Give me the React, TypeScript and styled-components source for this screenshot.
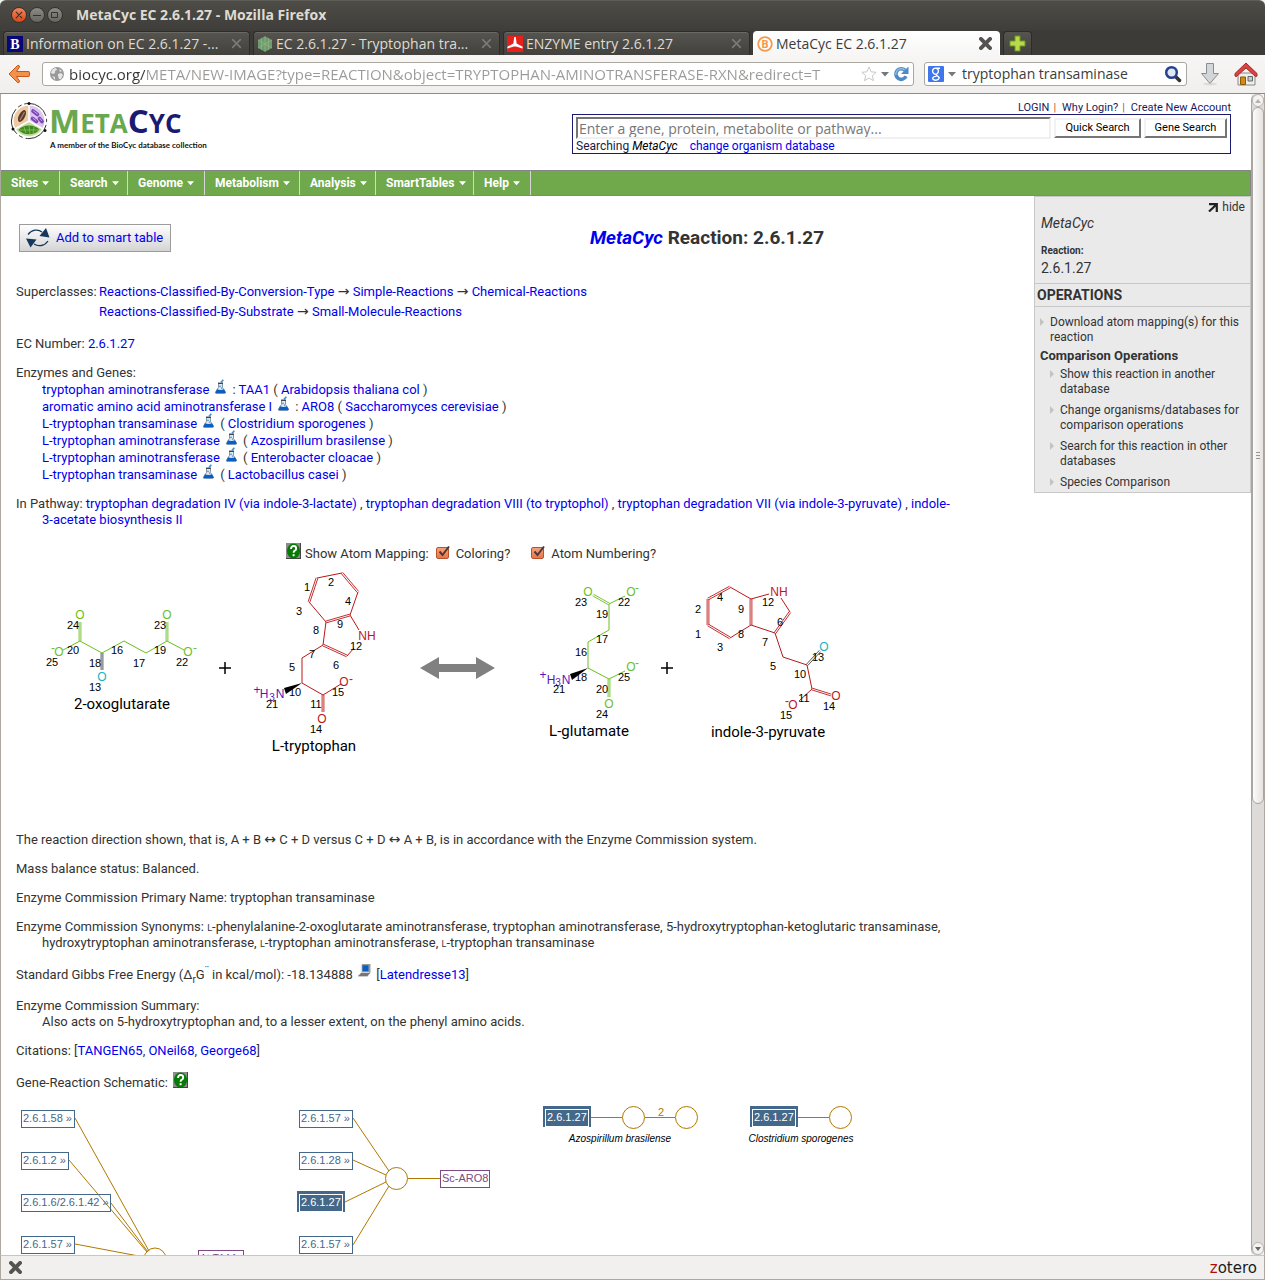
import React from "react";
import styled, { createGlobalStyle, css } from "styled-components";

const uiFont = `"Open Sans", "Noto Sans", sans-serif`;
const pageFont = `Roboto, "Open Sans", sans-serif`;
const link = "#0000ee";

const Global = createGlobalStyle`
  * { box-sizing: border-box; }
  body { margin: 0; background: #f2f1f0; font-family: ${pageFont}; font-size: 13px; line-height: 16px; color: #333; }
  a { color: ${link}; text-decoration: none; }
  svg { display: block; }
`;

/* ---------- window frame ---------- */

const Window = styled.div`
  display: flex;
  flex-direction: column;
  height: 100vh;
  overflow: hidden;
`;

const TitleBar = styled.header`
  display: flex;
  align-items: center;
  flex: none;
  height: 31px;
  padding: 0 11px 2px;
  border-top: 1px solid #5f5d57;
  border-radius: 6px 6px 0 0;
  background: linear-gradient(#4d4c47, #3e3d39);
  color: #dfdbd2;
  font: bold 14px/20px ${uiFont};
`;

const WindowButtons = styled.div`
  display: flex;
  gap: 2px;
  margin-right: 13px;
`;

const WindowButton = styled.button<{ $close?: boolean }>`
  display: grid;
  place-items: center;
  width: 16px;
  height: 16px;
  padding: 0;
  border: 1px solid #33322e;
  border-radius: 50%;
  background: ${(p) => (p.$close ? "linear-gradient(#f7845a, #d9481b)" : "linear-gradient(#8b8a83, #66655f)")};
  color: #33322e;
`;

const TabStrip = styled.div`
  display: flex;
  flex: none;
  gap: 3px;
  height: 24px;
  padding: 0 3px;
  background: #3c3b37;
`;

const Tab = styled.div<{ $active?: boolean }>`
  display: flex;
  align-items: center;
  flex: 0 1 247px;
  min-width: 0;
  height: 24px;
  gap: 3px;
  padding: 0 7px 0 3px;
  border-radius: 4px 4px 0 0;
  border: 1px solid #2d2c29;
  border-bottom: 0;
  box-shadow: inset 0 1px 0 #6a6964;
  background: linear-gradient(#55544f, #42413d);
  color: #dfdbd2;
  font: 14px/20px ${uiFont};
  ${(p) =>
    p.$active &&
    css`
      background: linear-gradient(#ffffff, #f7f6f5);
      border-color: #fff;
      box-shadow: none;
      color: #3c3c3c;
    `}
`;

const TabLabel = styled.span`
  flex: 1;
  min-width: 0;
  overflow: hidden;
  white-space: nowrap;
  text-overflow: ellipsis;
`;

const IconButton = styled.button<{ $color?: string }>`
  display: grid;
  place-items: center;
  flex: none;
  padding: 0;
  border: 0;
  background: none;
  color: ${(p) => p.$color ?? "#55534f"};
`;

const NewTab = styled.button`
  display: grid;
  place-items: center;
  width: 29px;
  height: 24px;
  padding: 0;
  border: 1px solid #2d2c29;
  border-bottom: 0;
  border-radius: 4px 4px 0 0;
  background: linear-gradient(#55544f, #42413d);
`;

const NavBar = styled.div`
  display: flex;
  align-items: center;
  flex: none;
  height: 39px;
  padding: 0 7px 0 8px;
  border-bottom: 1px solid #8f8c88;
  background: linear-gradient(#f7f6f5, #f0efee);
`;

const Field = styled.div<{ $grow?: boolean }>`
  display: flex;
  align-items: center;
  flex: ${(p) => (p.$grow ? "1 1 0" : "0 0 263px")};
  min-width: 0;
  height: 24px;
  gap: 4px;
  margin-left: 10px;
  padding: 0 4px 0 ${(p) => (p.$grow ? 6 : 3)}px;
  border: 1px solid #aaa6a0;
  border-radius: 3px;
  background: #fff;
`;

const FieldInput = styled.input<{ $url?: boolean }>`
  flex: 1;
  min-width: 0;
  height: 20px;
  padding: 0 0 0 2px;
  border: 0;
  outline: 0;
  background: none;
  color: #3c3c3c;
  font: 14px/20px ${uiFont};
  ${(p) =>
    p.$url &&
    css`
      padding: 0;
      font-size: 15px;
      color: transparent;
      background: linear-gradient(to right, #333 76px, #9c9a98 76px);
      background-clip: text;
      -webkit-background-clip: text;
    `}
`;

const NavTools = styled.div`
  display: flex;
  align-items: center;
  gap: 14px;
  margin-left: 13px;
`;

const Viewport = styled.div`
  display: flex;
  flex: 1;
  min-height: 0;
  border-left: 1px solid #aca8a0;
  border-right: 1px solid #aca8a0;
`;

const Page = styled.div`
  flex: 1;
  min-width: 0;
  overflow: hidden;
  background: #fff;
`;

const StatusBar = styled.footer`
  display: flex;
  align-items: center;
  justify-content: space-between;
  flex: none;
  height: 25px;
  padding: 0 7px 0 8px;
  border: 1px solid #aca8a0;
  border-top-color: #c9c5c1;
  background: #f1f0ee;
`;

const Zotero = styled.button`
  padding: 0;
  border: 0;
  background: none;
  color: #1c1c1c;
  font: 15px/20px "DejaVu Sans", sans-serif;
`;

const ZoteroZ = styled.span`
  color: #a81010;
`;

/* ---------- scroll bar ---------- */

const ScrollBar = styled.div`
  display: flex;
  flex-direction: column;
  flex: none;
  width: 13px;
  border-left: 1px solid #a9a5a1;
  border-radius: 6px;
  background: #dddad8;
`;

const ScrollArrow = styled.button`
  display: grid;
  place-items: center;
  flex: none;
  width: 12px;
  height: 13px;
  padding: 0;
  border: 1px solid #b8b4b0;
  border-radius: 6px;
  background: #f4f3f2;
`;

const ScrollThumb = styled.div`
  display: flex;
  flex-direction: column;
  justify-content: center;
  align-items: center;
  gap: 2px;
  flex: 0 0 60%;
  border: 1px solid #a9a5a1;
  border-radius: 6px;
  background: linear-gradient(to right, #fbfbfa, #e6e3e1);
`;

const Grip = styled.i`
  width: 4px;
  height: 1px;
  background: #9a9793;
`;

const Spring = styled.div`
  flex: 1;
`;

/* ---------- site header ---------- */

const SiteHeader = styled.div`
  display: flex;
  justify-content: space-between;
  height: 76px;
  padding: 6px 20px 0 8px;
`;

const Brand = styled.a`
  display: flex;
  height: 50px;
`;

const BrandWords = styled.span`
  display: flex;
  flex-direction: column;
  padding-top: 4px;
`;

const BrandName = styled.span`
  color: #6aa84f;
  font: bold 26px/33px "Open Sans", sans-serif;
`;

const Cap = styled.span`
  font-size: 33px;
`;

const Navy = styled.span`
  color: #1a1a72;
`;

const Tagline = styled.span`
  padding-left: 1px;
  color: #111;
  font: bold 8px/10px Lato, sans-serif;
  white-space: nowrap;
`;

const SearchArea = styled.div`
  width: 659px;
`;

const AccountLinks = styled.nav`
  display: flex;
  justify-content: flex-end;
  gap: 4px;
  height: 14px;
  font-size: 11px;
  line-height: 15px;
  color: #b5543a;
  a { color: #1a1a5e; }
  a + i + a { margin-left: 2px; }
  i { font-style: normal; }
`;

const SearchForm = styled.form`
  height: 40px;
  padding: 2px 3px 0;
  border: 1px solid #1a1a72;
`;

const SearchLine = styled.div`
  display: flex;
  align-items: center;
  gap: 3px;
`;

const SearchInput = styled.input`
  flex: 1;
  min-width: 0;
  height: 22px;
  padding: 0 1px;
  border: 2px solid;
  border-color: #757575 #f0f0f0 #f0f0f0 #757575;
  background: #fff;
  font: 14px/18px ${uiFont};
  &::placeholder { color: #777; opacity: 1; }
`;

const PushButton = styled.button<{ $width: number }>`
  width: ${(p) => p.$width}px;
  height: 20px;
  padding: 0;
  border: 2px solid;
  border-color: #f2f2f2 #757575 #757575 #f2f2f2;
  background: #fff;
  color: #000;
  font: 11px/14px ${pageFont};
`;

const Searching = styled.div`
  font-size: 12px;
  line-height: 15px;
  color: #1a1a3e;
  em { color: #000; margin-right: 12px; }
`;

const Menu = styled.nav`
  display: flex;
  height: 26px;
  border: 1px solid #858585;
  border-left: 0;
  background: #70a84c;
`;

const MenuItem = styled.button<{ $width: number }>`
  display: flex;
  align-items: center;
  gap: 4px;
  width: ${(p) => p.$width}px;
  padding: 0 0 0 10px;
  border: 0;
  border-right: 1px solid #d6d6d6;
  background: none;
  color: #fff;
  font: bold 12px/16px ${pageFont};
`;

/* ---------- record ---------- */

const Columns = styled.div`
  display: flex;
  align-items: flex-start;
`;

const Main = styled.main`
  flex: 1;
  min-width: 0;
  padding: 28px 0 0 15px;
`;

const TitleRow = styled.div`
  display: grid;
  grid-template-columns: 364px 1fr;
  align-items: center;
`;

const SmartTable = styled.button`
  display: flex;
  align-items: center;
  justify-self: start;
  gap: 6px;
  width: 152px;
  height: 28px;
  margin-left: 3px;
  padding: 0 6px;
  border: 1px solid #9c9c9c;
  background: linear-gradient(#fefefe, #d4d4d4);
  color: ${link};
  font: 13px/16px ${pageFont};
  white-space: nowrap;
`;

const Heading = styled.h1`
  margin: 0;
  text-align: center;
  font: bold 19px/24px ${pageFont};
`;

const Superclasses = styled.div`
  display: grid;
  grid-template-columns: 80px 1fr;
  column-gap: 3px;
  margin: 30px 0 14px;
  line-height: 20px;
`;

const Lineage = styled.div`
  grid-column: 2;
`;

const Arrow = styled.span`
  font-family: "DejaVu Sans", sans-serif;
  font-size: 14px;
  line-height: 0;
`;

const Para = styled.p<{ $line?: number }>`
  margin: 13px 36px 0 0;
  padding-left: 26px;
  text-indent: -26px;
  line-height: ${(p) => p.$line ?? 16}px;
`;

const EnzymeList = styled.ul`
  margin: 0;
  padding: 0 0 0 26px;
  list-style: none;
`;

const Enzyme = styled.li`
  display: flex;
  gap: 5px;
  height: 17px;
  line-height: 17px;
  svg { margin-top: -2px; }
`;

const NoBreak = styled.span`
  white-space: nowrap;
`;

const SmallL = styled.span`
  font-size: 9px;
  line-height: 0;
`;

const Sub = styled.sub`
  font-size: 10px;
  line-height: 0;
`;

const Sup = styled.sup`
  font-size: 10px;
  line-height: 0;
`;

const Inline = styled.span`
  display: inline-block;
  height: 16px;
  margin: 0 2px;
  vertical-align: -1px;
  text-indent: 0;
`;

const Options = styled.form`
  display: flex;
  align-items: center;
  gap: 4px;
  height: 24px;
  margin: 13px 0 0 270px;
  padding-top: 1px;
  > svg { margin-top: -6px; }
`;

const Option = styled.label`
  display: flex;
  align-items: center;
  gap: 5px;
  margin-right: 14px;
  margin-left: 3px;
`;

const TickWrap = styled.span`
  position: relative;
  width: 15px;
  height: 14px;
  margin-top: -4px;
`;

const TickInput = styled.input`
  display: block;
  appearance: none;
  width: 13px;
  height: 12px;
  margin: 2px 0 0;
  border: 1px solid #b8532f;
  border-radius: 2px;
  background: linear-gradient(#f6a07c, #ec7548);
`;

const TickMark = styled.svg`
  position: absolute;
  left: 0;
  top: 0;
  pointer-events: none;
`;

const Diagram = styled.svg`
  width: 820px;
  height: 254px;
  margin-left: 14px;
`;

const Schematic = styled.svg`
  width: 860px;
  height: 190px;
  margin-top: 7px;
`;

/* ---------- sidebar ---------- */

const Sidebar = styled.aside`
  flex: none;
  width: 217px;
  border: 1px solid #c8c8c8;
  background: #eaeaea;
  font-size: 12px;
  line-height: 15px;
  a { color: #333; }
`;

const SideTop = styled.div`
  display: flex;
  flex-direction: column;
  height: 86px;
  padding: 2px 6px 0;
`;

const HideButton = styled.button`
  display: flex;
  align-items: center;
  align-self: flex-end;
  gap: 4px;
  margin-right: -1px;
  padding: 0;
  border: 0;
  background: none;
  color: #333;
  font: 12px/16px ${pageFont};
`;

const Organism = styled.em`
  font-size: 14px;
  line-height: 17px;
`;

const SideLabel = styled.strong`
  margin-top: 13px;
  font-size: 10px;
  line-height: 12px;
`;

const SideValue = styled.span`
  margin-top: 2px;
  font-size: 14px;
  line-height: 18px;
`;

const SideHeading = styled.h2`
  margin: 0;
  padding: 0 2px;
  border: solid #c8c8c8;
  border-width: 1px 0;
  font: bold 14px/22px ${pageFont};
`;

const SideList = styled.ul<{ $nested?: boolean }>`
  display: flex;
  flex-direction: column;
  gap: 6px;
  margin: 0;
  padding: ${(p) => (p.$nested ? "4px 6px 2px 15px" : "8px 6px 0 5px")};
  list-style: none;
`;

const SideItem = styled.li`
  display: flex;
  align-items: flex-start;
  gap: 6px;
`;

const SideGroup = styled.h3`
  margin: 3px 0 0 5px;
  font: bold 13px/15px ${pageFont};
`;

const Bullet = styled.i`
  flex: none;
  margin-top: 3px;
  border: 4px solid transparent;
  border-left-color: #c2c2c2;
  border-right: 0;
`;

/* ---------- icons ---------- */

const Cross = ({ size = 10, width = 2 }: { size?: number; width?: number }) => (
  <svg width={size} height={size} viewBox="0 0 10 10" stroke="currentColor" strokeWidth={width} strokeLinecap="round">
    <path d="M1.500 1.500l7 7M8.500 1.500l-7 7" />
  </svg>
);

const Caret = ({ color = "#fff", width = 8 }: { color?: string; width?: number }) => (
  <svg width={width} height="5" viewBox="0 0 8 5">
    <path d="M0 0h8L4 4.600z" fill={color} />
  </svg>
);

const Flask = () => (
  <svg width="13" height="15" viewBox="0 0 12 15">
    <path d="M4 4.500h4v4l3 4.500q.2 1.300-.8 1.300H1.400Q.3 14.300 1 13l3-4.600z" fill="#dfe9f2" stroke="#6c7d8e" strokeWidth=".8" />
    <path d="M2.500 10.200q3.500 1.400 7 0l1.600 3q.1 1-1 1H1.900q-1.100 0-.7-1z" fill="#0a5fc4" />
    <path d="M3.500 4.200h5" stroke="#333" strokeWidth="1.200" />
    <path d="M6.500 3.500L8.800.8" stroke="#3f92d8" strokeWidth="1.700" />
    <circle cx="5.500" cy="7.400" r=".8" fill="#3f92d8" />
    <circle cx="7" cy="9" r=".6" fill="#0a5fc4" />
  </svg>
);

const Help = () => (
  <svg width="15" height="16" viewBox="0 0 15 16">
    <path d="M0 0h15v16H0z" fill="#8c8c8c" />
    <path d="M0 16h15V0" fill="none" stroke="#444" strokeWidth="2" />
    <ellipse cx="7.500" cy="8" rx="6.600" ry="7.400" fill="#057a05" />
    <path d="M5 6q0-3 2.600-3t2.600 2.400q0 1.600-1.700 2.500-.9.500-.9 1.800" fill="none" stroke="#fff" strokeWidth="1.900" />
    <path d="M6.600 11.200h2v2h-2z" fill="#fff" />
  </svg>
);

const Computer = () => (
  <svg width="13" height="13" viewBox="0 0 13 13">
    <path d="M4 0h8.500v8.500l-3 4H0l3.500-4z" fill="#9b9b9b" />
    <path d="M3.500 8.800h8.500L9.200 12H0z" fill="#777" />
    <path d="M4.500 1.300h6v6h-6z" fill="#0a5fc4" />
    <path d="M3.300.6v7.800h8" fill="none" stroke="#dcdcdc" />
  </svg>
);

const Cycle = () => (
  <svg width="24" height="20" viewBox="0 0 24 20" fill="none" stroke="#16375c" strokeWidth="1.300">
    <path d="M2 6.500C6 1.500 12 .8 16 4" />
    <path d="M22 13c-3.500 5-9.500 6-14 3" />
    <path d="M20 0l3.500 9.500L13.500 8z" fill="#16375c" stroke="none" />
    <path d="M0 10.500l10.500 1-6 8z" fill="#16375c" stroke="none" />
  </svg>
);

const BackArrow = () => (
  <svg width="24" height="20" viewBox="0 0 24 20">
    <path d="M1 10L9.500 1.500q2-.8 2 1.500L8.500 7.500H21q1.500 2.500 0 5H8.500l3 4.500q0 2.300-2 1.500z" fill="#f2924a" stroke="#c9561c" strokeLinejoin="round" />
  </svg>
);

const Globe = () => (
  <svg width="16" height="16" viewBox="0 0 16 16">
    <circle cx="8" cy="8" r="7" fill="#9a9a9a" />
    <path d="M3 4q2-2 4-2l1 2-2 1 0 2-2 1-2-1zM9 8l3-1 2 2-2 4-2 0-1-3zM10 3l3 2-2 1zM3 10l3 1 0 3z" fill="#e6e6e6" />
  </svg>
);

const Star = () => (
  <svg width="16" height="16" viewBox="0 0 16 16">
    <path d="M8 1l2.100 4.800 5 .5-3.800 3.400 1.200 5L8 12l-4.500 2.700 1.200-5L.9 6.300l5-.5z" fill="#fff" stroke="#cbc8c5" />
  </svg>
);

const Reload = () => (
  <svg width="16" height="16" viewBox="0 0 16 16">
    <path d="M12 4.300A5.300 5.300 0 1 0 13 10.300" fill="none" stroke="#4b8ac6" strokeWidth="3.600" />
    <path d="M15.500.5v7.500H8z" fill="#4b8ac6" />
    <path d="M11.500 3.800A5.300 5.300 0 0 0 3 9" fill="none" stroke="#9cc4ea" strokeWidth="1.200" />
  </svg>
);

const Google = () => (
  <svg width="16" height="16" viewBox="0 0 16 16">
    <rect width="16" height="16" rx="1" fill="#3f76ee" />
    <path d="M12 2.200H8a3 3 0 1 0 1 5.600M8.500 2.400c2.600 1 2.400 4.200.4 5.400-1.300.8-1 1.400.4 2.100 3 1.500 2 4.300-1.600 4.300-4 0-4.200-3.700.6-3.800" fill="none" stroke="#fff" strokeWidth="1.400" />
  </svg>
);

const Magnifier = () => (
  <svg width="18" height="18" viewBox="0 0 18 18">
    <path d="M11.500 11.500l4 4" stroke="#333" strokeWidth="3.500" strokeLinecap="round" />
    <circle cx="7.500" cy="7.500" r="5.300" fill="#dfe8f8" stroke="#27418e" strokeWidth="2.500" />
  </svg>
);

const Download = () => (
  <svg width="20" height="24" viewBox="0 0 20 24">
    <ellipse cx="10" cy="22" rx="7" ry="1.500" fill="#dcdcda" />
    <path d="M6.500 1.500h7v10h5L10 21.500 1.500 11.500h5z" fill="#d3d6d8" stroke="#8b8e90" strokeLinejoin="round" />
  </svg>
);

const Home = () => (
  <svg width="24" height="24" viewBox="0 0 24 24">
    <path d="M4 11h17v12H4z" fill="#eeeeec" stroke="#888a85" />
    <path d="M6.500 15h5v7.500h-5z" fill="#d08a1c" stroke="#8f5902" />
    <path d="M14 14.500h4.500V19H14z" fill="#b9cdda" stroke="#666" />
    <path d="M12 1L1 11.500v2.500q1 1 2 0l9-8 9 8q1 1 2 0v-2.500z" fill="#d84343" stroke="#a52828" strokeLinejoin="round" />
  </svg>
);

const Plus = () => (
  <svg width="17" height="17" viewBox="0 0 17 17">
    <path d="M6 1h5v5h5v5h-5v5H6v-5H1V6h5z" fill="#b9d84c" stroke="#6b9a1d" />
  </svg>
);

const BrendaIcon = () => (
  <svg width="16" height="16" viewBox="0 0 16 16">
    <path d="M0 0h16v16H0z" fill="#07077a" />
    <text x="8" y="13" textAnchor="middle" fontFamily="Liberation Serif, serif" fontWeight="bold" fontSize="14" fill="#fff">B</text>
  </svg>
);

const HexIcon = () => (
  <svg width="16" height="16" viewBox="0 0 16 16">
    <path d="M8 .3l7 3.700v8L8 15.700 1 12V4z" fill="#6f9a6c" />
    <path d="M8 .3v15.400M1 4l14 8M15 4L1 12M4.500 2.200v11.600M11.500 2.200v11.600" stroke="#8fb58a" strokeWidth=".7" />
  </svg>
);

const ExpasyIcon = () => (
  <svg width="16" height="16" viewBox="0 0 16 16">
    <path d="M0 0h16v16H0z" fill="#e8201c" />
    <path d="M7.200 1h1.600l.8 6.500 6 3.300v1.700L9 10.500H7L.4 12.500v-1.700l6-3.300z" fill="#fff" />
  </svg>
);

const BioCycIcon = () => (
  <svg width="16" height="16" viewBox="0 0 16 16">
    <circle cx="8" cy="8" r="6.800" fill="#fff" stroke="#f5994a" strokeWidth="1.800" />
    <text x="8" y="12" textAnchor="middle" fontFamily="Open Sans, sans-serif" fontWeight="bold" fontSize="11" fill="#f5994a">B</text>
  </svg>
);

const MetaLogo = () => (
  <svg width="40" height="42" viewBox="0 0 40 42">
    <circle cx="20" cy="21" r="15.500" fill="#fff" />
    <path d="M20 21V5.500A15.500 15.500 0 0 0 6.600 28.700z" fill="#eec9a4" />
    <path d="M20 21V5.500A15.500 15.500 0 0 1 33.400 28.700z" fill="#dcc6ee" />
    <path d="M20 21L6.600 28.700a15.500 15.500 0 0 0 26.800 0z" fill="#c6dba0" />
    <path d="M20 21V5M20 21L6 29M20 21l14 8" stroke="#fff" strokeWidth="1.500" />
    <ellipse cx="13" cy="16" rx="3" ry="6.500" transform="rotate(28 13 16)" fill="#59392b" />
    <path d="M11 20l4.500-8" stroke="#a98570" strokeWidth="1.300" />
    <g stroke="#7a45b5" strokeWidth="3.600" strokeLinecap="round">
      <path d="M24 11l4.500 3.500M23.500 18.500l4 3M30.500 18.500l2.500 3" />
    </g>
    <path d="M24.500 11l4 3M24 18.200l3 2.300M31 18.500l1.500 2" stroke="#c7a3ee" strokeLinecap="round" />
    <path d="M9.500 30q4-5 11-4.500 6 .3 10 4-4 5-11 4.800-6-.1-10-4.300z" fill="#3f8a22" />
    <path d="M11 30h19M15 27l2 6M20 26l1 8M25 27l-1 6.500" stroke="#8cc655" strokeWidth=".8" />
    <circle cx="20" cy="21" r="17.600" fill="none" stroke="#333" strokeDasharray="27 3 4 2.800" strokeDashoffset="-4" />
    <circle cx="20" cy="3.500" r="1.500" fill="#111" />
    <circle cx="4" cy="29" r="1.500" fill="#111" />
    <circle cx="36" cy="30.500" r="1.500" fill="#111" />
  </svg>
);

/* ---------- reaction drawing ---------- */

type Pt = [number, number];
type Bond = [Pt, Pt];
type Atom = [string, number, number, string?];
type Mark = [string, number, number];

const green = "#6abf1e";
const red = "#bb1717";
const cyan = "#12b5c4";
const purple = "#5c12b5";

function DoubleBond({ a, b, color }: { a: Pt; b: Pt; color: string }) {
  const len = Math.hypot(b[0] - a[0], b[1] - a[1]);
  const nx = ((b[1] - a[1]) / len) * 0.9;
  const ny = ((a[0] - b[0]) / len) * 0.9;
  return (
    <g stroke={color} strokeWidth=".9">
      <line x1={a[0] + nx} y1={a[1] + ny} x2={b[0] + nx} y2={b[1] + ny} />
      <line x1={a[0] - nx} y1={a[1] - ny} x2={b[0] - nx} y2={b[1] - ny} />
    </g>
  );
}

interface MoleculeProps {
  color: string;
  single: Pt[][];
  double: Bond[];
  dark?: Bond;
  wedge?: string;
  atoms: Atom[];
  marks: Mark[];
  name: Mark;
}

function Molecule({ color, single, double, dark, wedge, atoms, marks, name }: MoleculeProps) {
  return (
    <g>
      {single.map((pts, i) => (
        <polyline key={i} points={pts.map((p) => p.join(",")).join(" ")} fill="none" stroke={color} />
      ))}
      {double.map(([a, b], i) => (
        <DoubleBond key={i} a={a} b={b} color={color} />
      ))}
      {dark && <DoubleBond a={dark[0]} b={dark[1]} color="#444" />}
      {wedge && <path d={wedge} fill="#000" />}
      <g fontFamily="Liberation Sans, Arial, sans-serif" fontSize="11" textAnchor="middle">
        {atoms.map(([t, x, y, c], i) => (
          <text key={i} x={x} y={y + 4} fontSize={t === "3" ? 10 : 12} fill={c ?? color}>{t}</text>
        ))}
        {marks.map(([t, x, y], i) => (
          <text key={i} x={x} y={y + 4} fill="#000">{t}</text>
        ))}
      </g>
      <text x={name[1]} y={name[2] + 5} fontFamily="Roboto, sans-serif" fontSize="15" textAnchor="middle" fill="#000">{name[0]}</text>
    </g>
  );
}

const oxoglutarate: MoleculeProps = {
  color: green,
  single: [
    [[63, 650], [80, 641], [102, 653], [124, 641], [146, 653], [167, 641], [184, 650]],
  ],
  double: [[[80, 622], [80, 641]], [[167, 622], [167, 641]]],
  dark: [[102, 653], [102, 670]],
  atoms: [["O", 80, 615], ["O", 59, 652], ["-", 53, 648], ["O", 102, 677, cyan], ["O", 167, 615], ["O", 188, 652], ["-", 195, 648]],
  marks: [["24", 73, 625], ["20", 73, 650], ["25", 52, 662], ["18", 95, 663], ["13", 95, 687], ["16", 117, 650], ["17", 139, 663], ["19", 160, 650], ["23", 160, 625], ["22", 182, 662]],
  name: ["2-oxoglutarate", 122, 704],
};

const tryptophan: MoleculeProps = {
  color: red,
  single: [
    [[317, 578], [342, 573]],
    [[358, 592], [350, 615], [359, 630]],
    [[309, 602], [326, 622], [323, 645], [302, 658], [302, 683], [323, 695], [341, 684]],
    [[354, 648], [347, 656]],
  ],
  double: [[[317, 578], [309, 602]], [[342, 573], [358, 592]], [[350, 615], [326, 622]], [[347, 656], [323, 645]], [[323, 695], [323, 712]]],
  wedge: "M302 683L284 688L286 694Z",
  atoms: [["NH", 367, 636], ["O", 322, 719], ["O", 344, 682], ["-", 351, 679], ["+", 257, 690, purple], ["H", 264, 694, purple], ["3", 272, 697, purple], ["N", 280, 694, purple]],
  marks: [["1", 307, 587], ["2", 331, 582], ["3", 299, 611], ["4", 348, 601], ["9", 340, 624], ["8", 316, 630], ["12", 356, 646], ["7", 312, 654], ["6", 336, 665], ["5", 292, 667], ["10", 295, 692], ["15", 338, 692], ["11", 316, 704], ["14", 316, 729], ["21", 272, 704]],
  name: ["L-tryptophan", 314, 746],
};

const glutamate: MoleculeProps = {
  color: green,
  single: [
    [[625, 596], [609, 604], [609, 630], [588, 642], [588, 668], [609, 679], [625, 671]],
  ],
  double: [[[593, 595], [609, 604]], [[609, 679], [609, 697]]],
  wedge: "M588 668L570 674L572 680Z",
  atoms: [["O", 588, 592], ["O", 631, 592], ["-", 637, 588], ["O", 631, 667], ["-", 637, 663], ["O", 609, 704], ["+", 543, 675, purple], ["H", 551, 680, purple], ["3", 558, 682, purple], ["N", 566, 680, purple]],
  marks: [["23", 581, 602], ["22", 624, 602], ["19", 602, 614], ["17", 602, 639], ["16", 581, 652], ["18", 581, 677], ["25", 624, 677], ["20", 602, 689], ["21", 559, 689], ["24", 602, 714]],
  name: ["L-glutamate", 589, 731],
};

const indolepyruvate: MoleculeProps = {
  color: red,
  single: [
    [[730, 587], [751, 599], [769, 594]],
    [[730, 638], [751, 625], [775, 633], [783, 657], [807, 665], [812, 689], [799, 701]],
    [[781, 598], [790, 612]],
  ],
  double: [[[730, 587], [708, 599]], [[708, 599], [708, 625]], [[708, 625], [730, 638]], [[751, 625], [751, 599]], [[790, 612], [775, 633]], [[812, 689], [831, 695]]],
  dark: [[807, 665], [820, 651]],
  atoms: [["NH", 779, 592], ["O", 824, 647, cyan], ["O", 836, 696], ["O", 793, 705], ["-", 787, 701]],
  marks: [["4", 720, 597], ["2", 698, 609], ["9", 741, 609], ["12", 768, 602], ["1", 698, 634], ["8", 741, 634], ["6", 780, 622], ["3", 720, 647], ["7", 765, 642], ["5", 773, 666], ["13", 818, 657], ["10", 800, 674], ["11", 804, 698], ["14", 829, 706], ["15", 786, 715]],
  name: ["indole-3-pyruvate", 768, 732],
};

const Reaction = () => (
  <Diagram viewBox="30 565 820 254" role="img" aria-label="Reaction diagram">
    <Molecule {...oxoglutarate} />
    <path d="M219 668h12M225 662v12M661 668h12M667 662v12" stroke="#000" strokeWidth="1.500" />
    <Molecule {...tryptophan} />
    <path d="M420 668l19-11v7h37v-7l19 11-19 11v-7h-37v7z" fill="#808080" />
    <Molecule {...glutamate} />
    <Molecule {...indolepyruvate} />
  </Diagram>
);

/* ---------- gene schematic ---------- */

const brown = "#b07800";
const steel = "#44688a";

function NodeBox({ x, y, width, text, color = steel, size = 11 }: { x: number; y: number; width: number; text: string; color?: string; size?: number }) {
  return (
    <g>
      <rect x={x + 0.5} y={y + 0.5} width={width - 1} height="17" fill="none" stroke={color} />
      <text x={x + 2} y={y + 12} fontSize={size} fill={color}>{text}</text>
    </g>
  );
}

function CurrentEc({ x, y }: { x: number; y: number }) {
  return (
    <g>
      <rect x={x} y={y} width="48" height="21" fill={steel} />
      <rect x={x + 2.5} y={y + 3.5} width="43" height="17" fill="none" stroke="#fff" />
      <text x={x + 4} y={y + 15} fill="#fff">2.6.1.27</text>
    </g>
  );
}

const GeneSchematic = () => (
  <Schematic viewBox="16 1100 860 190" fontFamily="Liberation Sans, Arial, sans-serif" fontSize="11" role="img" aria-label="Gene-reaction schematic">
    <g fill="none" stroke={brown}>
      <path d="M75 1118L149 1251M69 1160L147 1252M111 1203L148 1252M75 1244L144 1257" />
      <circle cx="155" cy="1259" r="11" />
      <path d="M353 1118L389 1171M353 1160L386 1175M345 1202L386 1182M353 1245L389 1186M408 1178.500h32" />
      <circle cx="396.500" cy="1178.500" r="11" />
      <path d="M591 1117.500h31M645 1117.500h30M798 1117.500h31" />
      <circle cx="633.500" cy="1117.500" r="11" />
      <circle cx="686.500" cy="1117.500" r="11" />
      <circle cx="840.500" cy="1117.500" r="11" />
    </g>
    <NodeBox x={21} y={1110} width={54} text="2.6.1.58 »" />
    <NodeBox x={21} y={1152} width={48} text="2.6.1.2 »" />
    <NodeBox x={21} y={1194} width={90} text="2.6.1.6/2.6.1.42 »" />
    <NodeBox x={21} y={1236} width={54} text="2.6.1.57 »" />
    <NodeBox x={198} y={1250} width={46} text="At-TAA1" color="#7d4a85" size={10} />
    <NodeBox x={299} y={1110} width={54} text="2.6.1.57 »" />
    <NodeBox x={299} y={1152} width={54} text="2.6.1.28 »" />
    <CurrentEc x={297} y={1191} />
    <NodeBox x={299} y={1236} width={54} text="2.6.1.57 »" />
    <NodeBox x={440} y={1170} width={50} text="Sc-ARO8" color="#7d4a85" size={11} />
    <CurrentEc x={543} y={1106} />
    <CurrentEc x={750} y={1106} />
    <text x="661" y="1116" textAnchor="middle" fill={brown}>2</text>
    <text x="620" y="1142" textAnchor="middle" fontSize="10" fontStyle="italic" fill="#000">Azospirillum brasilense</text>
    <text x="801" y="1142" textAnchor="middle" fontSize="10" fontStyle="italic" fill="#000">Clostridium sporogenes</text>
  </Schematic>
);

/* ---------- data ---------- */

const tabs = [
  { icon: <BrendaIcon />, label: "Information on EC 2.6.1.27 -..." },
  { icon: <HexIcon />, label: "EC 2.6.1.27 - Tryptophan tra..." },
  { icon: <ExpasyIcon />, label: "ENZYME entry 2.6.1.27" },
  { icon: <BioCycIcon />, label: "MetaCyc EC 2.6.1.27", active: true },
];

const menu: [string, number][] = [
  ["Sites", 59], ["Search", 68], ["Genome", 77], ["Metabolism", 95], ["Analysis", 76], ["SmartTables", 98], ["Help", 57],
];

const enzymes = [
  { name: "tryptophan aminotransferase", gene: "TAA1", organism: "Arabidopsis thaliana col" },
  { name: "aromatic amino acid aminotransferase I", gene: "ARO8", organism: "Saccharomyces cerevisiae" },
  { name: "L-tryptophan transaminase", organism: "Clostridium sporogenes" },
  { name: "L-tryptophan aminotransferase", organism: "Azospirillum brasilense" },
  { name: "L-tryptophan aminotransferase", organism: "Enterobacter cloacae" },
  { name: "L-tryptophan transaminase", organism: "Lactobacillus casei" },
];

const comparisons = [
  "Show this reaction in another database",
  "Change organisms/databases for comparison operations",
  "Search for this reaction in other databases",
  "Species Comparison",
];

const Link = ({ children }: { children: React.ReactNode }) => <a href="#">{children}</a>;

const Tick = ({ id, children }: { id: string; children: React.ReactNode }) => (
  <Option htmlFor={id}>
    <TickWrap>
      <TickInput id={id} type="checkbox" defaultChecked />
      <TickMark width="15" height="14" viewBox="0 0 15 14">
        <path d="M3.500 6.500l3 3.500L13 1.500" fill="none" stroke="#4a3a34" strokeWidth="2" />
      </TickMark>
    </TickWrap>
    {children}
  </Option>
);

export default function App() {
  return (
    <Window>
      <Global />
      <TitleBar>
        <WindowButtons>
          <WindowButton $close aria-label="Close"><Cross size={8} width={1.5} /></WindowButton>
          <WindowButton aria-label="Minimize">
            <svg width="8" height="8" viewBox="0 0 8 8" stroke="currentColor"><path d="M0 4.500h8" /></svg>
          </WindowButton>
          <WindowButton aria-label="Maximize">
            <svg width="8" height="8" viewBox="0 0 8 8" fill="none" stroke="currentColor"><path d="M.5 1.500h6v5h-6z" /></svg>
          </WindowButton>
        </WindowButtons>
        MetaCyc EC 2.6.1.27 - Mozilla Firefox
      </TitleBar>

      <TabStrip>
        {tabs.map((t) => (
          <Tab key={t.label} $active={t.active}>
            {t.icon}
            <TabLabel>{t.label}</TabLabel>
            <IconButton aria-label="Close tab" $color={t.active ? "#55534f" : "#7b7a75"}>
              <Cross size={t.active ? 13 : 11} width={t.active ? 3 : 1.5} />
            </IconButton>
          </Tab>
        ))}
        <NewTab aria-label="New tab"><Plus /></NewTab>
      </TabStrip>

      <NavBar>
        <IconButton aria-label="Back"><BackArrow /></IconButton>
        <Field $grow>
          <Globe />
          <FieldInput
            $url
            aria-label="Address"
            defaultValue="biocyc.org/META/NEW-IMAGE?type=REACTION&object=TRYPTOPHAN-AMINOTRANSFERASE-RXN&redirect=T"
          />
          <Star />
          <Caret color="#777" />
          <IconButton aria-label="Reload"><Reload /></IconButton>
        </Field>
        <Field>
          <Google />
          <Caret color="#777" />
          <FieldInput aria-label="Web search" defaultValue="tryptophan transaminase" />
          <IconButton aria-label="Search"><Magnifier /></IconButton>
        </Field>
        <NavTools>
          <IconButton aria-label="Downloads"><Download /></IconButton>
          <IconButton aria-label="Home"><Home /></IconButton>
        </NavTools>
      </NavBar>

      <Viewport>
        <Page>
          <SiteHeader>
            <Brand href="#">
              <MetaLogo />
              <BrandWords>
                <BrandName><Cap>M</Cap>ETA<Navy><Cap>C</Cap>YC</Navy></BrandName>
                <Tagline>A member of the BioCyc database collection</Tagline>
              </BrandWords>
            </Brand>
            <SearchArea>
              <AccountLinks>
                <Link>LOGIN</Link><i>|</i>
                <Link>Why Login?</Link><i>|</i>
                <Link>Create New Account</Link>
              </AccountLinks>
              <SearchForm>
                <SearchLine>
                  <SearchInput aria-label="Search" placeholder="Enter a gene, protein, metabolite or pathway..." />
                  <PushButton type="button" $width={87}>Quick Search</PushButton>
                  <PushButton type="button" $width={83}>Gene Search</PushButton>
                </SearchLine>
                <Searching>Searching <em>MetaCyc</em><Link>change organism database</Link></Searching>
              </SearchForm>
            </SearchArea>
          </SiteHeader>

          <Menu>
            {menu.map(([label, width]) => (
              <MenuItem key={label} $width={width}>{label}<Caret width={7} /></MenuItem>
            ))}
          </Menu>

          <Columns>
            <Main>
              <TitleRow>
                <SmartTable><Cycle />Add to smart table</SmartTable>
                <Heading><Link><em>MetaCyc</em></Link> Reaction: 2.6.1.27</Heading>
              </TitleRow>

              <Superclasses>
                <span>Superclasses:</span>
                <Lineage><Link>Reactions-Classified-By-Conversion-Type</Link> <Arrow>→</Arrow> <Link>Simple-Reactions</Link> <Arrow>→</Arrow> <Link>Chemical-Reactions</Link></Lineage>
                <Lineage><Link>Reactions-Classified-By-Substrate</Link> <Arrow>→</Arrow> <Link>Small-Molecule-Reactions</Link></Lineage>
              </Superclasses>

              <Para>EC Number: <Link>2.6.1.27</Link></Para>

              <Para>Enzymes and Genes:</Para>
              <EnzymeList>
                {enzymes.map((e, i) => (
                  <Enzyme key={i}>
                    <Link>{e.name}</Link>
                    <Flask />
                    <span>
                      {e.gene && <>: <Link>{e.gene}</Link> </>}( <Link>{e.organism}</Link> )
                    </span>
                  </Enzyme>
                ))}
              </EnzymeList>

              <Para>
                In Pathway: <Link>tryptophan degradation IV (via indole-3-lactate)</Link> , <Link>tryptophan degradation VIII (to tryptophol)</Link> , <Link>tryptophan degradation VII (via indole-3-pyruvate)</Link> , <Link>indole-<wbr /><NoBreak>3-acetate biosynthesis II</NoBreak></Link>
              </Para>

              <Options>
                <Help />
                <span>Show Atom Mapping:</span>
                <Tick id="coloring">Coloring?</Tick>
                <Tick id="numbering">Atom Numbering?</Tick>
              </Options>

              <Reaction />

              <Para>
                The reaction direction shown, that is, A + B <Arrow>↔</Arrow> C + D versus C + D <Arrow>↔</Arrow> A + B, is in accordance with the Enzyme Commission system.
              </Para>
              <Para>Mass balance status: Balanced.</Para>
              <Para>Enzyme Commission Primary Name: tryptophan transaminase</Para>
              <Para>
                Enzyme Commission Synonyms: <SmallL>L</SmallL>-phenylalanine-2-oxoglutarate aminotransferase, tryptophan aminotransferase, 5-hydroxytryptophan-ketoglutaric transaminase, hydroxytryptophan aminotransferase, <SmallL>L</SmallL>-tryptophan aminotransferase, <SmallL>L</SmallL>-tryptophan transaminase
              </Para>
              <Para $line={20}>
                Standard Gibbs Free Energy (Δ<Sub>r</Sub>G<Sup>¨</Sup> in kcal/mol): -18.134888 <Inline><Computer /></Inline> [<Link>Latendresse13</Link>]
              </Para>
              <Para>
                Enzyme Commission Summary:<br />
                Also acts on 5-hydroxytryptophan and, to a lesser extent, on the phenyl amino acids.
              </Para>
              <Para>Citations: [<Link>TANGEN65</Link>, <Link>ONeil68</Link>, <Link>George68</Link>]</Para>
              <Para $line={20}>Gene-Reaction Schematic: <Inline><Help /></Inline></Para>
              <GeneSchematic />
            </Main>

            <Sidebar>
              <SideTop>
                <HideButton>
                  <svg width="10" height="9" viewBox="0 0 10 9"><path d="M1 1.200h7.800V9M8.500 1.500L1 8.500" fill="none" stroke="#222" strokeWidth="2.200" /></svg>
                  hide
                </HideButton>
                <Organism>MetaCyc</Organism>
                <SideLabel>Reaction:</SideLabel>
                <SideValue>2.6.1.27</SideValue>
              </SideTop>
              <SideHeading>OPERATIONS</SideHeading>
              <SideList>
                <SideItem><Bullet /><Link>Download atom mapping(s) for this reaction</Link></SideItem>
              </SideList>
              <SideGroup>Comparison Operations</SideGroup>
              <SideList $nested>
                {comparisons.map((c) => (
                  <SideItem key={c}><Bullet /><Link>{c}</Link></SideItem>
                ))}
              </SideList>
            </Sidebar>
          </Columns>
        </Page>

        <ScrollBar>
          <ScrollArrow aria-label="Scroll up">
            <svg width="6" height="4" viewBox="0 0 6 4"><path d="M0 4h6L3 0z" fill="#b5b2ae" /></svg>
          </ScrollArrow>
          <ScrollThumb><Grip /><Grip /><Grip /></ScrollThumb>
          <Spring />
          <ScrollArrow aria-label="Scroll down">
            <svg width="6" height="4" viewBox="0 0 6 4"><path d="M0 0h6L3 4z" fill="#666" /></svg>
          </ScrollArrow>
        </ScrollBar>
      </Viewport>

      <StatusBar>
        <IconButton aria-label="Close bar"><Cross size={13} width={3} /></IconButton>
        <Zotero><ZoteroZ>z</ZoteroZ>otero</Zotero>
      </StatusBar>
    </Window>
  );
}
